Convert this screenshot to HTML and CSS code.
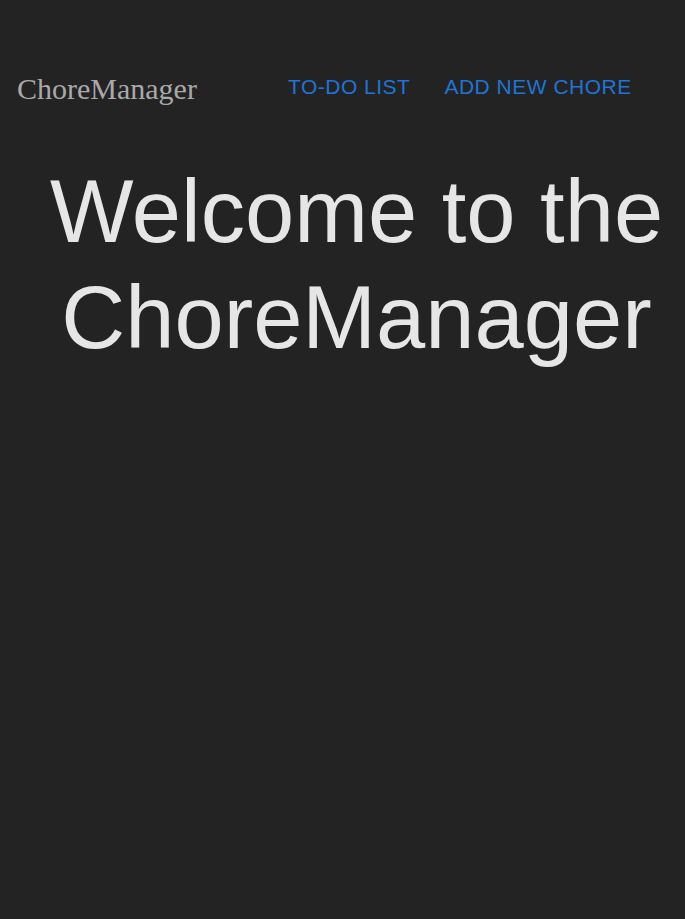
FILE: index.html
```html
<!DOCTYPE html>
<html>
<head>
<meta charset="utf-8">
<link rel="stylesheet" href="styles.css">
</head>
<body>
<nav class="navbar">
  <a class="brand" href="#">ChoreManager</a>
  <ul class="nav-links">
    <li><a href="#">To-Do List</a></li>
    <li><a href="#">Add New Chore</a></li>
  </ul>
</nav>
<main class="hero">
  <h1 class="title">Welcome to the ChoreManager</h1>
</main>
</body>
</html>
```
FILE: styles.css
```css
html, body {
  margin: 0;
  padding: 0;
  background: #232323;
  height: 100%;
}
body {
  font-family: "Liberation Sans", Arial, sans-serif;
}
.navbar {
  display: flex;
  align-items: center;
  padding: 72px 0 0 17px;
}
.brand {
  font-family: "Liberation Serif", "Times New Roman", serif;
  font-size: 30px;
  color: #a9a9a9;
  text-decoration: none;
}
.nav-links {
  list-style: none;
  display: flex;
  gap: 34px;
  margin: 0 0 4px 91px;
  padding: 0;
}
.nav-links a {
  font-size: 21px;
  text-transform: uppercase;
  letter-spacing: 0.5px;
  color: #1f74d6;
  text-decoration: none;
}
.hero {
  padding: 0 0 0 28px;
}
.title {
  margin: 53px 0 0;
  text-align: center;
  font-size: 88.5px;
  font-weight: normal;
  line-height: 106px;
  color: #e6e6e6;
}
```
